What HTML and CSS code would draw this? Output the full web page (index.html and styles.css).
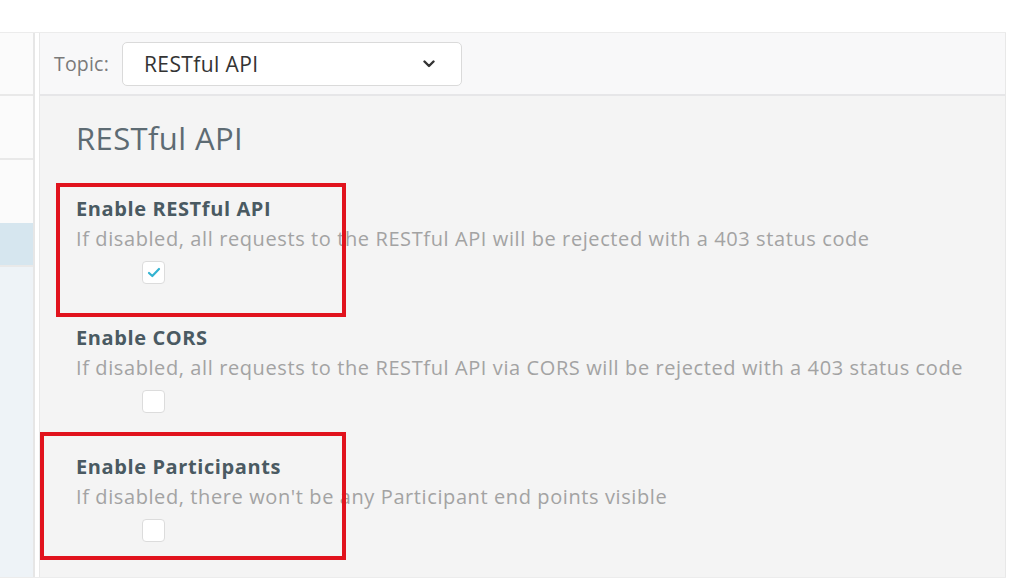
FILE: index.html
```html
<!DOCTYPE html>
<html lang="en">
<head>
<meta charset="utf-8">
<title>RESTful API settings</title>
<link rel="stylesheet" href="styles.css">
</head>
<body>
<div class="frame">
  <aside class="sidebar">
    <div class="side-row side-head"></div>
    <div class="side-row"></div>
    <div class="side-row side-gap"></div>
    <div class="side-row side-active"></div>
    <div class="side-rest"></div>
  </aside>
  <main class="panel">
    <header class="panel-head">
      <label class="topic-label" for="topic">Topic:</label>
      <div class="select">
        <span class="select-value">RESTful API</span>
        <svg class="chev" width="12" height="8" viewBox="0 0 12 8"><path d="M1.5 1.5 L6 6 L10.5 1.5" fill="none" stroke="#333" stroke-width="2.4" stroke-linecap="round" stroke-linejoin="round"/></svg>
      </div>
    </header>
    <section class="content">
      <h1 class="title">RESTful API</h1>
      <div class="setting">
        <div class="setting-name">Enable RESTful API</div>
        <div class="setting-desc">If disabled, all requests to the RESTful API will be rejected with a 403 status code</div>
        <span class="check checked"><svg width="14" height="11" viewBox="0 0 14 11"><path d="M2 6 L5.3 9 L12 2" fill="none" stroke="#33b3d1" stroke-width="2.2" stroke-linecap="round" stroke-linejoin="round"/></svg></span>
      </div>
      <div class="setting">
        <div class="setting-name">Enable CORS</div>
        <div class="setting-desc">If disabled, all requests to the RESTful API via CORS will be rejected with a 403 status code</div>
        <span class="check"></span>
      </div>
      <div class="setting">
        <div class="setting-name">Enable Participants</div>
        <div class="setting-desc">If disabled, there won't be any Participant end points visible</div>
        <span class="check"></span>
      </div>
      <div class="mark mark-one"></div>
      <div class="mark mark-two"></div>
    </section>
  </main>
</div>
</body>
</html>
```
FILE: styles.css
```css
* { box-sizing: border-box; }
html, body { margin: 0; padding: 0; background: #ffffff; }
body {
  font-family: "Open Sans", "Lato", sans-serif;
  width: 1012px;
  height: 584px;
  padding-top: 32px;
  overflow: hidden;
}
.frame {
  display: flex;
  height: 546px;
  border-top: 1px solid #ececec;
  border-bottom: 1px solid #ececec;
  margin-right: 6px;
}
.sidebar {
  width: 35px;
  display: flex;
  flex-direction: column;
  border-right: 2px solid #e6e6e6;
  margin-right: 4px;
}
.side-row { flex-shrink: 0; height: 64px; border-bottom: 2px solid #e9e9e9; background: #fbfbfb; }
.side-head { height: 63px; }
.side-gap { border-bottom: none; height: 63px; }
.side-active { height: 44px; background: #d6e6ef; }
.side-rest { flex: 1; background: #eef3f7; }
.panel {
  flex: 1;
  display: flex;
  flex-direction: column;
  border-left: 1px solid #e8e8e8;
  border-right: 1px solid #e8e8e8;
}
.panel-head {
  flex-shrink: 0;
  height: 63px;
  background: #f8f8f9;
  border-bottom: 2px solid #e6e6e8;
  display: flex;
  align-items: center;
  padding-left: 14px;
  gap: 13px;
}
.topic-label { color: #7a7a7a; font-size: 19.5px; letter-spacing: 0.2px; }
.select {
  width: 340px;
  height: 44px;
  background: #fff;
  border: 1px solid #dadada;
  border-radius: 5px;
  display: flex;
  align-items: center;
  justify-content: space-between;
  padding: 0 26px 0 21px;
}
.select-value { color: #333; font-size: 21px; letter-spacing: 0.4px; }
.content {
  flex: 1;
  min-height: 0;
  overflow: hidden;
  background: #f4f4f4;
  padding: 22px 0 0 36px;
  position: relative;
}
.title {
  margin: 0 0 36px;
  font-weight: normal;
  font-size: 31px;
  line-height: 40px;
  color: #5d6b73;
  letter-spacing: 0.4px;
}
.setting { height: 129px; }
.setting-name {
  font-weight: bold;
  font-size: 20px;
  line-height: 30px;
  color: #4a5a62;
  letter-spacing: 0.6px;
}
.setting-desc {
  font-size: 20px;
  line-height: 30px;
  color: #a3a3a3;
  letter-spacing: 0.6px;
}
.check {
  display: flex;
  align-items: center;
  justify-content: center;
  margin: 7px 0 0 66px;
  width: 23px;
  height: 23px;
  background: #fff;
  border: 1px solid #dcdcdc;
  border-radius: 4px;
}
.mark {
  position: absolute;
  border: 4px solid #e1131d;
}
.mark-one { left: 16px; top: 87px; width: 290px; height: 134px; }
.mark-two { left: 0; top: 336px; width: 306px; height: 128px; }
```
